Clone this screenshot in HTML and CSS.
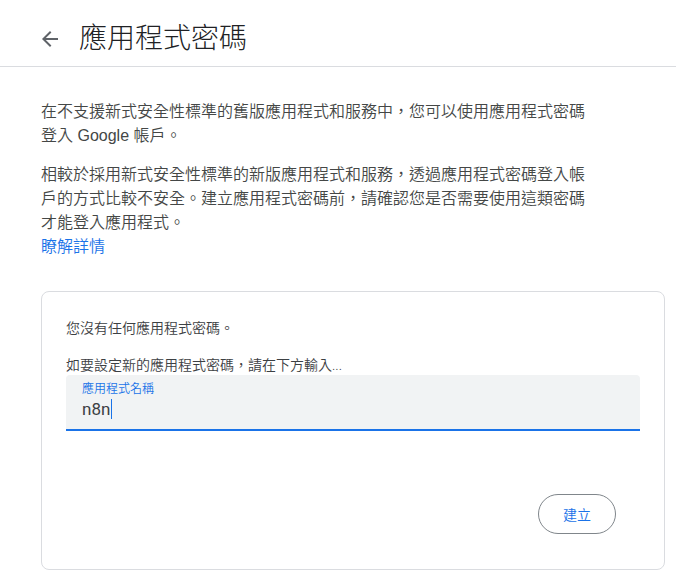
FILE: index.html
```html
<!DOCTYPE html>
<html lang="zh-Hant">
<head>
<meta charset="utf-8">
<link rel="stylesheet" href="styles.css">
</head>
<body>
<header class="topbar">
  <span class="back" aria-label="返回">
    <svg viewBox="0 0 24 24" width="24" height="24"><path d="M20 11H7.83l5.59-5.59L12 4l-8 8 8 8 1.41-1.41L7.83 13H20v-2z" fill="#5f6368"/></svg>
  </span>
  <h1 class="title">應用程式密碼</h1>
</header>
<main class="content">
  <p class="desc desc-first">在不支援新式安全性標準的舊版應用程式和服務中，您可以使用應用程式密碼登入 Google 帳戶。</p>
  <p class="desc">相較於採用新式安全性標準的新版應用程式和服務，透過應用程式密碼登入帳戶的方式比較不安全。建立應用程式密碼前，請確認您是否需要使用這類密碼才能登入應用程式。</p>
  <a class="learn" href="#">瞭解詳情</a>
  <section class="card">
    <p class="card-text">您沒有任何應用程式密碼。</p>
    <p class="card-text card-hint">如要設定新的應用程式密碼，請在下方輸入...</p>
    <div class="field">
      <span class="field-label">應用程式名稱</span>
      <span class="field-value">n8n<span class="caret"></span></span>
    </div>
    <div class="actions">
      <button class="btn">建立</button>
    </div>
  </section>
</main>
</body>
</html>
```
FILE: styles.css
```css
html, body {
  margin: 0;
  padding: 0;
  background: #fff;
}
body {
  font-family: Roboto, "Noto Sans CJK TC", "Noto Sans CJK SC", sans-serif;
  color: #444746;
}
.topbar {
  display: flex;
  align-items: center;
  height: 48px;
  padding: 15px 0 3px 38px;
  border-bottom: 1px solid #dadce0;
}
.back {
  display: flex;
  width: 24px;
  height: 24px;
  margin-right: 17px;
}
.title {
  margin: 0;
  font-size: 28px;
  font-weight: 300;
  line-height: 48px;
  color: #202124;
}
.content {
  padding: 0 11px 0 41px;
}
.desc {
  width: 552px;
  margin: 15px 0 0;
  font-family: "Liberation Sans", "Noto Sans CJK TC", sans-serif;
  font-size: 16px;
  font-weight: 350;
  line-height: 24px;
}
.desc-first {
  margin-top: 33px;
}
.learn {
  display: block;
  font-size: 16px;
  font-weight: 350;
  line-height: 24px;
  color: #1a73e8;
  text-decoration: none;
}
.card {
  margin-top: 32px;
  border: 1px solid #dadce0;
  border-radius: 8px;
  padding: 26px 24px 35px;
}
.card-text {
  margin: 0;
  font-size: 14px;
  font-weight: 350;
  line-height: 20px;
  color: #3c4043;
}
.card-hint {
  margin-top: 17px;
}
.field {
  display: flex;
  flex-direction: column;
  height: 54px;
  padding: 0 16px;
  background: #f1f3f4;
  border-radius: 4px 4px 0 0;
  border-bottom: 2px solid #1a73e8;
}
.field-label {
  margin-top: 6px;
  font-size: 12px;
  font-weight: 350;
  line-height: 16px;
  color: #1a73e8;
}
.field-value {
  display: flex;
  align-items: center;
  font-size: 17px;
  line-height: 24px;
  color: #3c4043;
}
.caret {
  display: inline-block;
  width: 1px;
  height: 20px;
  margin-left: 1px;
  background: #1a73e8;
}
.actions {
  display: flex;
  justify-content: flex-end;
  margin-top: 63px;
  padding-right: 24px;
}
.btn {
  height: 40px;
  padding: 0 24px;
  border: 1px solid #80868b;
  border-radius: 20px;
  background: #fff;
  font-family: Roboto, "Noto Sans CJK TC", sans-serif;
  font-size: 14px;
  font-weight: 350;
  color: #1a73e8;
}
```
